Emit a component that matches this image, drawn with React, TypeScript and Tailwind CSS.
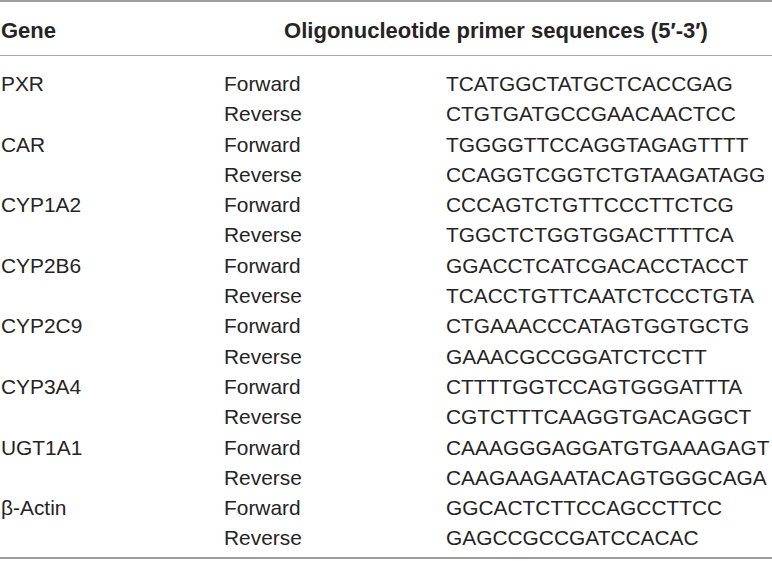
const ROWS: [string, string, string][] = [
  ['PXR', 'Forward', 'TCATGGCTATGCTCACCGAG'],
  ['', 'Reverse', 'CTGTGATGCCGAACAACTCC'],
  ['CAR', 'Forward', 'TGGGGTTCCAGGTAGAGTTTT'],
  ['', 'Reverse', 'CCAGGTCGGTCTGTAAGATAGG'],
  ['CYP1A2', 'Forward', 'CCCAGTCTGTTCCCTTCTCG'],
  ['', 'Reverse', 'TGGCTCTGGTGGACTTTTCA'],
  ['CYP2B6', 'Forward', 'GGACCTCATCGACACCTACCT'],
  ['', 'Reverse', 'TCACCTGTTCAATCTCCCTGTA'],
  ['CYP2C9', 'Forward', 'CTGAAACCCATAGTGGTGCTG'],
  ['', 'Reverse', 'GAAACGCCGGATCTCCTT'],
  ['CYP3A4', 'Forward', 'CTTTTGGTCCAGTGGGATTTA'],
  ['', 'Reverse', 'CGTCTTTCAAGGTGACAGGCT'],
  ['UGT1A1', 'Forward', 'CAAAGGGAGGATGTGAAAGAGT'],
  ['', 'Reverse', 'CAAGAAGAATACAGTGGGCAGA'],
  ['β-Actin', 'Forward', 'GGCACTCTTCCAGCCTTCC'],
  ['', 'Reverse', 'GAGCCGCCGATCCACAC'],
]

export default function App() {
  return (
    <div className="w-[772px] h-[561px] bg-white text-[#262324] font-['Liberation_Sans',Arial,sans-serif] text-[20.9px]">
      <div className="border-t-2 border-b-2 border-[#9d9d9d]">
        {/* Header */}
        <div className="grid grid-cols-[224px_1fr] h-[54px] items-center pt-[3px] border-b border-[#a8a8a8] font-bold text-[22px]">
          <span className="pl-[1px]">Gene</span>
          <span className="text-center pr-[4px]">Oligonucleotide primer sequences (5′-3′)</span>
        </div>

        {/* Body */}
        <div className="pt-[12px] pb-[4px]">
          {ROWS.map(([gene, dir, seq], i) => (
            <div key={i} className="grid grid-cols-[224px_222px_1fr] h-[30.3px] items-center">
              <span className="pl-[1px]">{gene}</span>
              <span>{dir}</span>
              <span>{seq}</span>
            </div>
          ))}
        </div>
      </div>
    </div>
  )
}
